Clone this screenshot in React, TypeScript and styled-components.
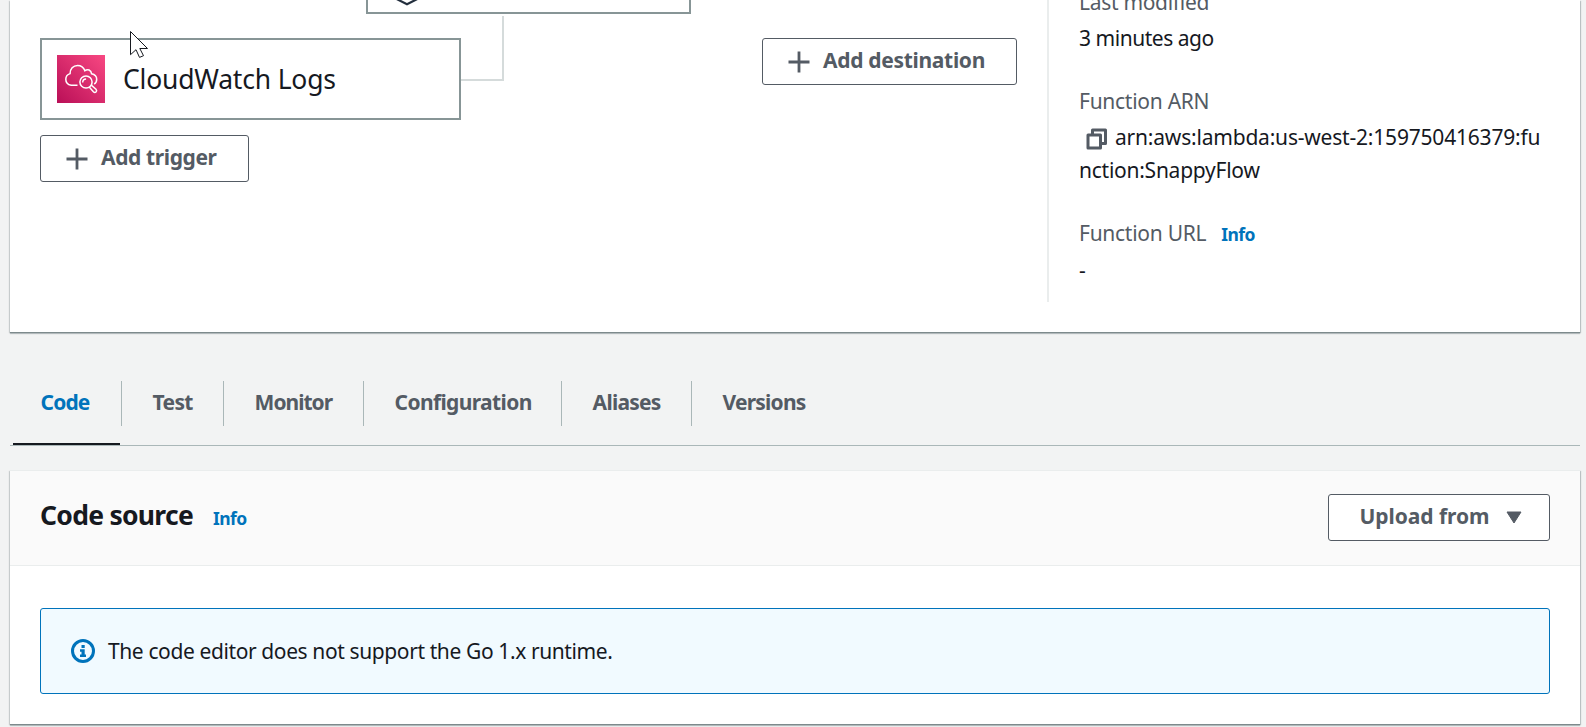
import React from "react";
import styled, { createGlobalStyle } from "styled-components";

const GlobalStyle = createGlobalStyle`
  * { box-sizing: border-box; }
  body {
    margin: 0;
    background: #f2f3f3;
    color: #16191f;
    font-family: "Noto Sans", "Open Sans", sans-serif;
    font-size: 21px;
    line-height: 33px;
  }
`;

const Page = styled.main`
  display: flex;
  flex-direction: column;
  height: 727px;
  padding: 0 6px 0 10px;
  overflow: hidden;
`;

const panelShadow = `
  box-shadow: 0 1px 0 0 #7d8a8c, 0 2px 1px 0 rgba(0, 28, 36, 0.22),
    1px 1px 1px 0 rgba(0, 28, 36, 0.2), -1px 1px 1px 0 rgba(0, 28, 36, 0.15);
`;

const OverviewPanel = styled.section`
  display: flex;
  flex: none;
  height: 332px;
  padding-bottom: 30px;
  background: #fff;
  ${panelShadow}
`;

const Diagram = styled.div`
  position: relative;
  display: flex;
  justify-content: space-between;
  align-items: flex-start;
  width: 1037px;
  padding: 38px 30px 0;
`;

const TriggerColumn = styled.div`
  display: flex;
  flex-direction: column;
  align-items: flex-start;
  gap: 15px;
`;

const TriggerCard = styled.div`
  display: flex;
  align-items: center;
  gap: 18px;
  width: 421px;
  height: 82px;
  padding-left: 15px;
  border: 2px solid #879596;
  background: #fff;
`;

const TriggerName = styled.span`
  font-size: 26.5px;
  letter-spacing: -0.2px;
  line-height: 36px;
`;

const FunctionNode = styled.div`
  position: absolute;
  left: 356px;
  top: -68px;
  width: 325px;
  height: 82px;
  border: 2px solid #879596;
  background: #fff;
`;

const FunctionGlyph = styled.svg`
  position: absolute;
  left: 15px;
  bottom: 6px;
`;

const Connector = styled.div`
  position: absolute;
  left: 451px;
  top: 16px;
  width: 43px;
  height: 65px;
  border: solid #d5dbdb;
  border-width: 0 2px 2px 0;
`;

const Pointer = styled.svg`
  position: absolute;
  left: 119px;
  top: 30px;
`;

const Button = styled.button<{ $width: number; $gap: number; $inset: number; $tracking: number }>`
  display: flex;
  align-items: center;
  gap: ${(p) => p.$gap}px;
  width: ${(p) => p.$width}px;
  height: 47px;
  padding: 0 0 0 ${(p) => p.$inset}px;
  border: 1px solid #545b64;
  border-radius: 3px;
  background: #fff;
  color: #545b64;
  font: 700 21px/43px "Noto Sans", sans-serif;
  letter-spacing: ${(p) => p.$tracking}px;
  white-space: nowrap;
`;

const ButtonLabel = styled.span`
  padding-bottom: 2px;
`;

const Details = styled.dl`
  width: 503px;
  height: 316px;
  margin: -14px 0 0;
  padding: 0 0 0 30px;
  border-left: 2px solid #eaeded;
`;

const Term = styled.dt<{ $tracking: number }>`
  display: flex;
  align-items: baseline;
  gap: 15px;
  margin-bottom: 3px;
  color: #545b64;
  letter-spacing: ${(p) => p.$tracking}px;
`;

const Value = styled.dd`
  margin: 0 0 30px;
  white-space: nowrap;
`;

const ValueLine = styled.span<{ $tracking: number }>`
  display: flex;
  align-items: center;
  letter-spacing: ${(p) => p.$tracking}px;
`;

const CopyGlyph = styled.svg`
  flex: none;
  margin: 3px 7px 0 7px;
`;

const InfoLink = styled.a`
  color: #0073bb;
  font-size: 17.5px;
  font-weight: 700;
  letter-spacing: -0.6px;
`;

const TabBar = styled.nav`
  display: flex;
  flex: none;
  align-items: flex-start;
  height: 65px;
  margin-top: 49px;
  border-bottom: 1px solid #aab7b8;
`;

const Tab = styled.a<{ $width: number; $tracking: number; $active?: boolean }>`
  position: relative;
  width: ${(p) => p.$width}px;
  height: 45px;
  padding-left: 30.6px;
  border-right: 1px solid #aab7b8;
  color: ${(p) => (p.$active ? "#0073bb" : "#545b64")};
  font-weight: 700;
  letter-spacing: ${(p) => p.$tracking}px;
  line-height: 43px;

  &:last-child {
    border-right: 0;
  }

  &::after {
    content: ${(p) => (p.$active ? '""' : "none")};
    position: absolute;
    left: 3px;
    top: 62px;
    width: 107px;
    height: 2px;
    background: #16191f;
  }
`;

const SourcePanel = styled.section`
  flex: none;
  height: 254px;
  margin-top: 24px;
  border-top: 1px solid #eaeded;
  background: #fff;
  ${panelShadow}
`;

const PanelHeader = styled.header`
  display: flex;
  justify-content: space-between;
  align-items: flex-start;
  height: 95px;
  padding: 23px 30px 0;
  border-bottom: 1px solid #eaeded;
  background: #fafafa;
`;

const TitleGroup = styled.div`
  display: flex;
  align-items: baseline;
  gap: 20px;
  padding-top: 3px;
`;

const Title = styled.h2`
  margin: 0;
  font-size: 26.5px;
  font-weight: 700;
  letter-spacing: -0.72px;
  line-height: 36px;
`;

const Alert = styled.div`
  display: flex;
  align-items: center;
  gap: 13px;
  height: 86px;
  margin: 42px 30px 0;
  padding-left: 30px;
  border: 1px solid #0073bb;
  border-radius: 3px;
  background: #f1faff;
  letter-spacing: -0.39px;
`;

const PlusIcon = () => (
  <svg width="22" height="22" viewBox="0 0 22 22" stroke="#545b64" strokeWidth="2.8" fill="none">
    <path d="M11 .5v21M.5 11h21" />
  </svg>
);

const CloudWatchIcon = () => (
  <svg width="48" height="48" viewBox="0 0 48 48" fill="none" stroke="#fff" strokeWidth="1.5">
    <defs>
      <linearGradient id="cw" x1="0" y1="48" x2="48" y2="0" gradientUnits="userSpaceOnUse">
        <stop stopColor="#b90f57" />
        <stop offset="1" stopColor="#f84882" />
      </linearGradient>
    </defs>
    <rect width="48" height="48" fill="url(#cw)" stroke="none" />
    <path d="M20.5 30.3h-6.3c-3.2-.5-5.4-2.8-5.4-6 0-2.9 1.5-4.9 4.3-5.7-.1-4.5 3-8.2 7.5-8.2 3.500 0 6 1.900 7.300 5.400 2.700-2.300 6.300-.9 6.700 3 3.300.7 5.100 2.700 5.100 5.500 0 2.200-.8 3.700-2.500 4.700" />
    <circle cx="29" cy="27" r="6.1" />
    <path d="M25.700 27.600c0-2 1.300-3.500 3.400-3.500" />
    <path d="M34.300 30.100l4.700 4.200c1.700 1.900-.8 4.300-2.600 2.500l-4.200-4.700" />
  </svg>
);

const InfoIcon = () => (
  <svg width="24" height="24" viewBox="0 0 24 24">
    <circle cx="12" cy="12" r="10.5" fill="none" stroke="#0073bb" strokeWidth="3" />
    <path d="M10.500 6h3.200v3h-3.200zM9 10.300h4.700v5.200H15V18H9v-2.500h1.500v-2.700H9z" fill="#0073bb" />
  </svg>
);

const tabs = [
  { label: "Code", width: 112, tracking: -0.9 },
  { label: "Test", width: 102, tracking: -0.7 },
  { label: "Monitor", width: 140, tracking: -1 },
  { label: "Configuration", width: 198, tracking: -0.63 },
  { label: "Aliases", width: 130, tracking: -0.75 },
  { label: "Versions", width: 150, tracking: -0.8 },
];

export default function App() {
  return (
    <>
      <GlobalStyle />
      <Page>
        <OverviewPanel>
          <Diagram>
            <TriggerColumn>
              <TriggerCard>
                <CloudWatchIcon />
                <TriggerName>CloudWatch Logs</TriggerName>
              </TriggerCard>
              <Button $width={209} $gap={13} $inset={25} $tracking={-0.38}>
                <PlusIcon />
                <ButtonLabel>Add trigger</ButtonLabel>
              </Button>
            </TriggerColumn>
            <Button $width={255} $gap={13} $inset={25} $tracking={-0.31}>
              <PlusIcon />
              <ButtonLabel>Add destination</ButtonLabel>
            </Button>
            <FunctionNode>
              <FunctionGlyph width="48" height="54" viewBox="0 0 48 54" fill="none" stroke="#232f3e" strokeWidth="2.2">
                <path d="M24 2L46 13v28L24 52.300 2 41V13z" />
              </FunctionGlyph>
            </FunctionNode>
            <Connector />
            <Pointer width="22" height="30" viewBox="0 0 22 30" fill="#fff" stroke="#16191f">
              <path d="M1.500 1.500v23.200l5.500-5 3.500 7.700 4-1.700-3.700-7.200h7.700z" />
            </Pointer>
          </Diagram>
          <Details>
            <Term $tracking={-0.3}>Last modified</Term>
            <Value>
              <ValueLine $tracking={-0.47}>3 minutes ago</ValueLine>
            </Value>
            <Term $tracking={-0.27}>Function ARN</Term>
            <Value>
              <ValueLine $tracking={-0.2}>
                <CopyGlyph width="22" height="22" viewBox="0 0 22 22" fill="none" stroke="#545b64" strokeWidth="3" strokeLinejoin="round">
                  <path d="M2 7h12.500v13H2z" />
                  <path d="M6.500 6.500V2h13v13.500H15" />
                </CopyGlyph>
                arn:aws:lambda:us-west-2:159750416379:fu
              </ValueLine>
              <ValueLine $tracking={-0.25}>nction:SnappyFlow</ValueLine>
            </Value>
            <Term $tracking={-0.27}>
              Function URL <InfoLink>Info</InfoLink>
            </Term>
            <Value>-</Value>
          </Details>
        </OverviewPanel>

        <TabBar>
          {tabs.map((tab, i) => (
            <Tab key={tab.label} $width={tab.width} $tracking={tab.tracking} $active={i === 0}>
              {tab.label}
            </Tab>
          ))}
        </TabBar>

        <SourcePanel>
          <PanelHeader>
            <TitleGroup>
              <Title>Code source</Title>
              <InfoLink>Info</InfoLink>
            </TitleGroup>
            <Button $width={222} $gap={16} $inset={30.5} $tracking={-0.05}>
              <ButtonLabel>Upload from</ButtonLabel>
              <svg width="16" height="13" viewBox="0 0 16 13" fill="#545b64" stroke="#545b64" strokeLinejoin="round">
                <path d="M1 1h14L8 12z" />
              </svg>
            </Button>
          </PanelHeader>
          <Alert>
            <InfoIcon />
            The code editor does not support the Go 1.x runtime.
          </Alert>
        </SourcePanel>
      </Page>
    </>
  );
}
